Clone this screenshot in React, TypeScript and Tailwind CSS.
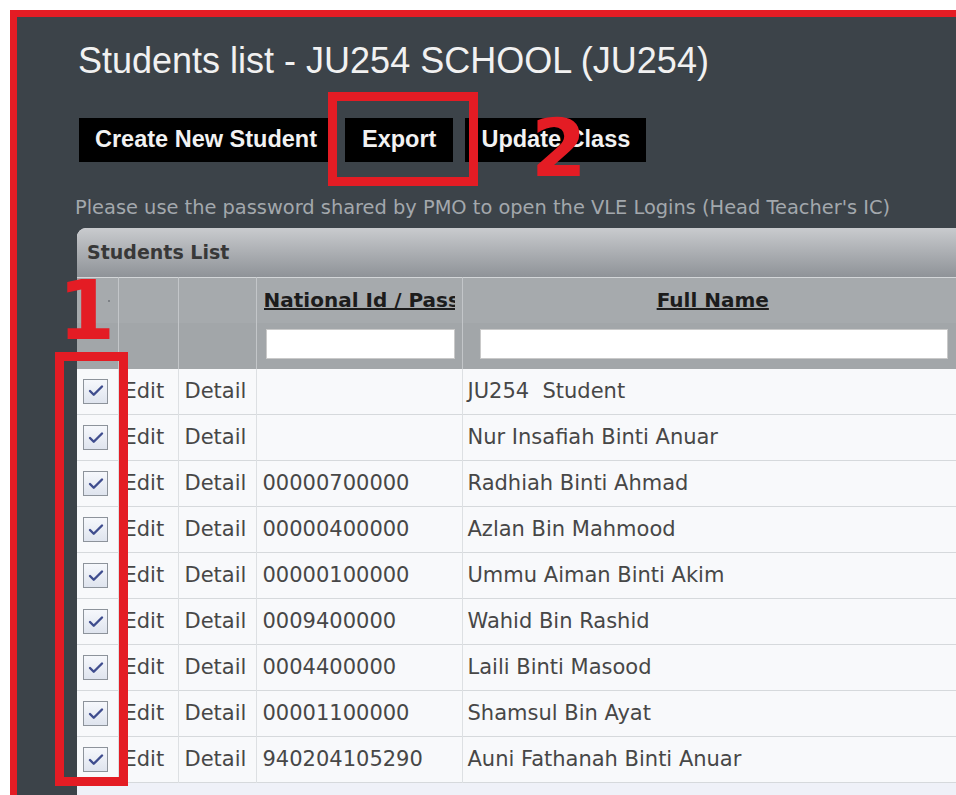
import { Check } from "lucide-react";

type Student = { nationalId: string; fullName: string };

const students: Student[] = [
  { nationalId: "", fullName: "JU254  Student" },
  { nationalId: "", fullName: "Nur Insafiah Binti Anuar" },
  { nationalId: "00000700000", fullName: "Radhiah Binti Ahmad" },
  { nationalId: "00000400000", fullName: "Azlan Bin Mahmood" },
  { nationalId: "00000100000", fullName: "Ummu Aiman Binti Akim" },
  { nationalId: "0009400000", fullName: "Wahid Bin Rashid" },
  { nationalId: "0004400000", fullName: "Laili Binti Masood" },
  { nationalId: "00001100000", fullName: "Shamsul Bin Ayat" },
  { nationalId: "940204105290", fullName: "Auni Fathanah Binti Anuar" },
];

function CheckBox() {
  return (
    <div className="ml-[6px] flex h-[25px] w-[25px] items-center justify-center border border-[#8d939b] bg-gradient-to-b from-[#f6f8fc] to-[#dfe4ee]">
      <Check className="h-[18px] w-[18px] text-[#3f4d8e]" strokeWidth={3.2} />
    </div>
  );
}

function StudentsTable() {
  return (
    <div className="mt-[9px] w-[886px] overflow-hidden rounded-tl-[9px] bg-[#eff1f8] font-['DejaVu_Sans',sans-serif]">
      {/* caption bar */}
      <div className="flex h-[49px] items-center bg-gradient-to-b from-[#c9cbce] to-[#8f9398] pl-[10px] text-[19px] font-bold text-[#383838]">
        Students List
      </div>

      <table className="w-full table-fixed border-collapse">
        <colgroup>
          <col className="w-[41px]" />
          <col className="w-[60px]" />
          <col className="w-[78px]" />
          <col className="w-[206px]" />
          <col />
        </colgroup>
        <thead>
          <tr className="h-[45px] border-t border-[#d3d6d8] bg-[#a6aaad]">
            <th className="relative border-r border-[#c3c6c9]">
              <span className="absolute right-[8px] top-[22px] h-[2px] w-[2px] bg-[#7d8186]" />
            </th>
            <th className="border-r border-[#c3c6c9]" />
            <th className="border-r border-[#c3c6c9]" />
            <th className="border-r border-[#c3c6c9] pl-[7px] pr-[7px] text-left text-[20px] font-bold text-[#1c1c1c]">
              <div className="overflow-hidden whitespace-nowrap underline">National Id / Passport</div>
            </th>
            <th className="text-center text-[20px] font-bold text-[#1c1c1c] underline">
              Full Name
            </th>
          </tr>
          <tr className="h-[46px] bg-[#a2a6a9]">
            <td className="border-r border-[#c3c6c9]" />
            <td className="border-r border-[#c3c6c9]" />
            <td className="border-r border-[#c3c6c9]" />
            <td className="border-r border-[#c3c6c9] pl-[9px] pr-[7px] pb-[4px]">
              <input className="block h-[30px] w-full border border-[#c9c9c9] bg-white" />
            </td>
            <td className="pl-[17px] pr-[15px] pb-[4px]">
              <input className="block h-[30px] w-full border border-[#c9c9c9] bg-white" />
            </td>
          </tr>
        </thead>
        <tbody className="text-[21px] text-[#474747]">
          {students.map((s, i) => (
            <tr key={i} className="h-[46px] border-b border-[#d6d9dc] bg-[#f8f9fb]">
              <td className="border-r border-[#dde0e3]">
                <CheckBox />
              </td>
              <td className="border-r border-[#dde0e3] pl-[5px]">Edit</td>
              <td className="border-r border-[#dde0e3] pl-[6px]">Detail</td>
              <td className="border-r border-[#dde0e3] pl-[6px]">{s.nationalId}</td>
              <td className="whitespace-pre pl-[5px]">{s.fullName}</td>
            </tr>
          ))}
        </tbody>
      </table>
      <div className="h-[20px]" />
    </div>
  );
}

export default function App() {
  return (
    <div className="relative h-[795px] w-[956px] overflow-hidden bg-white pl-[10px] pt-[10px]">
      <div className="h-full border-l-[7px] border-t-[7px] border-[#e41c24] bg-[#3c4349] pl-[60px] pt-[23px]">
        <h1 className="pl-[1px] font-['Liberation_Sans',Arial,sans-serif] text-[36px] leading-[42px] text-[#f1f1f1]">
          Students list - JU254 SCHOOL (JU254)
        </h1>

        <div className="mt-[36px] flex gap-[12px] pl-[2px] font-['Liberation_Sans',Arial,sans-serif] text-[23.5px] font-bold text-[#f2f2f2]">
          <button className="h-[44px] bg-black px-[16px]">Create New Student</button>
          <button className="h-[44px] bg-black px-[17px]">Export</button>
          <button className="h-[44px] bg-black px-[16px]">Update Class</button>
        </div>

        <p className="mt-[34px] -ml-[2px] font-['DejaVu_Sans',sans-serif] text-[19.4px] leading-[23px] text-[#a3a8ad]">
          Please use the password shared by PMO to open the VLE Logins (Head Teacher's IC)
        </p>

        <StudentsTable />
      </div>

      {/* step markers drawn over the page */}
      <div className="pointer-events-none absolute left-[328px] top-[92px] h-[94px] w-[150px] border-[9px] border-[#e41c24]" />
      <div className="pointer-events-none absolute left-[531px] top-[104px] font-['DejaVu_Sans',sans-serif] text-[80px] font-bold leading-[90px] text-[#e41c24]">
        2
      </div>
      <div className="pointer-events-none absolute left-[55px] top-[352px] h-[434px] w-[73px] border-[9px] border-[#e41c24]" />
      <div className="pointer-events-none absolute left-[58px] top-[266px] font-['DejaVu_Sans',sans-serif] text-[82px] font-bold leading-[90px] text-[#e41c24]">
        1
      </div>
    </div>
  );
}
